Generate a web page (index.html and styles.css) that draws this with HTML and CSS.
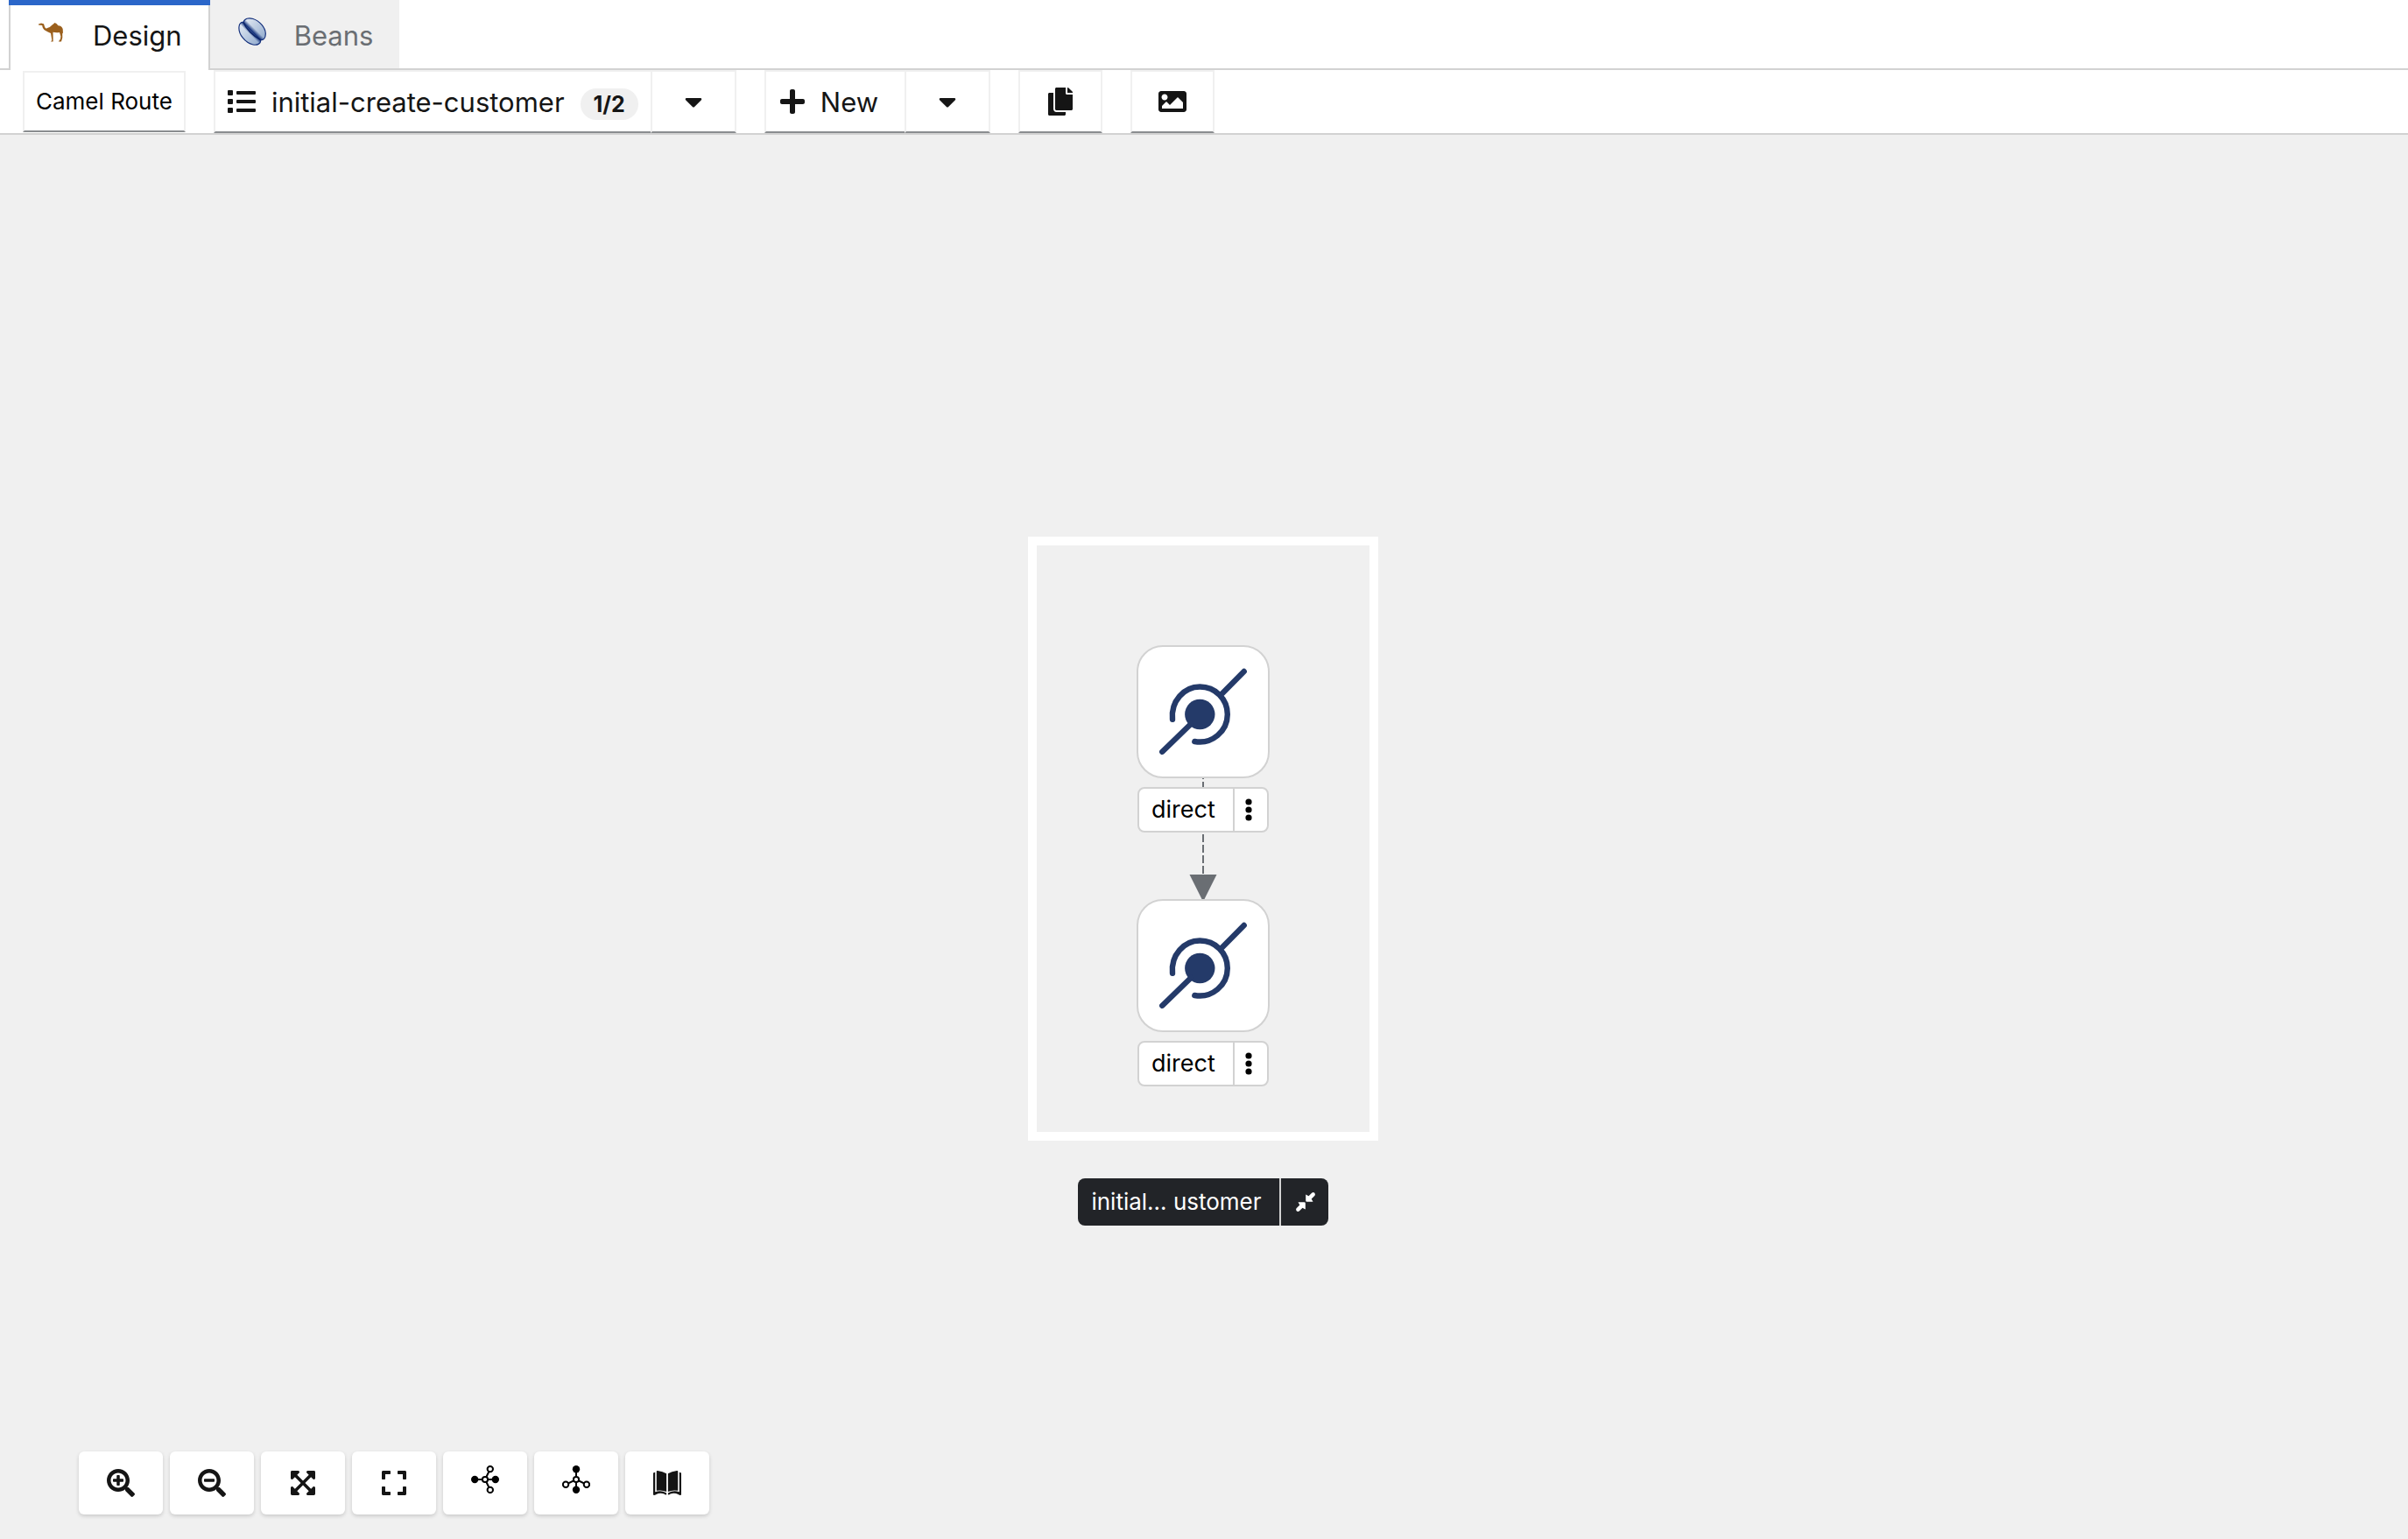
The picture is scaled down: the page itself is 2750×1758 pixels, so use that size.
FILE: index.html
```html
<!DOCTYPE html>
<html lang="en">
<head>
<meta charset="utf-8">
<title>Camel Route designer</title>
<link rel="stylesheet" href="styles.css">
</head>
<body>
<svg class="defs" aria-hidden="true">
  <defs>
    <linearGradient id="bean-light" x1="0" y1="0" x2="1" y2="1">
      <stop offset="0" stop-color="#f0f4f9"/>
      <stop offset="1" stop-color="#86a2c8"/>
    </linearGradient>
    <linearGradient id="bean-groove" x1="1" y1="0" x2="0" y2="1">
      <stop offset="0.400" stop-color="#12307a" stop-opacity="0"/>
      <stop offset="0.500" stop-color="#12307a"/>
      <stop offset="0.600" stop-color="#12307a" stop-opacity="0"/>
    </linearGradient>
    <symbol id="caret" viewBox="0 0 320 512"><path d="M31.3 192h257.3c17.8 0 26.7 21.5 14.1 34.1L174.1 354.7c-7.8 7.8-20.5 7.8-28.3 0L17.2 226.1C4.6 213.5 13.4 192 31.3 192z"/></symbol>
    <symbol id="direct" viewBox="0 0 148 148">
      <circle cx="70.3" cy="77" r="17.2"/>
      <path d="M39 82.7C37 62 52 45.5 70.3 45.5C88 45.5 101.8 59.5 101.8 77C101.8 96.500 84 111.500 64.300 108M27.300 119.700L60 88M95 54L120.700 28" fill="none" stroke="currentColor" stroke-width="6.400" stroke-linecap="round"/>
    </symbol>
    <symbol id="kebab" viewBox="0 0 8 26"><circle cx="4" cy="4" r="3.600"/><circle cx="4" cy="13" r="3.600"/><circle cx="4" cy="22" r="3.600"/></symbol>
  </defs>
</svg>

<div class="tabs" role="tablist">
  <button class="tab tab-active" role="tab" aria-selected="true">
    <svg class="camel" viewBox="0 0 28 22" aria-hidden="true"><path d="M0 1.500L3 .5L6 1.200L7 4.500Q8 7.500 10 6Q13 5.300 15 3Q17 1.500 18.500 0Q20.500 .5 22.500 3.200Q26.500 3.500 27.700 7L28 12.500L27.200 11.500Q28 17 26 21.500L22.800 21.500L25 18.500L25.400 15.500L24 11Q20 11.500 16.500 10.800L16.700 21.500L14 21.500L15.300 20L14 12Q10.500 10.500 8 9Q4.500 7 4.200 3L0 2.500Z"/></svg>
    <span>Design</span>
  </button>
  <button class="tab" role="tab" aria-selected="false">
    <svg class="bean" viewBox="0 0 32 32" aria-hidden="true">
      <path d="M6 5.500C7 1 12 0 17 1.500C25 4 31 12 31.300 18C31.500 23 29 26.500 25.500 25.500C26.500 29.500 22 32 17 31C8 29 0 19 1 10.500C1.300 7.500 3 5 6 5.500Z" fill="url(#bean-light)"/>
      <path d="M6 5.500C7 1 12 0 17 1.500C25 4 31 12 31.300 18C31.500 23 29 26.500 25.500 25.500C26.500 29.500 22 32 17 31C8 29 0 19 1 10.500C1.300 7.500 3 5 6 5.500Z" fill="url(#bean-groove)" stroke="#14307c" stroke-width="1.200"/>
      <path d="M6 5.500C9 13 17 21 25.500 25.500" fill="none" stroke="#0c2468" stroke-width="1.500"/>
    </svg>
    <span>Beans</span>
  </button>
</div>

<div class="toolbar" role="toolbar" aria-label="Route actions">
  <button class="control dsl">Camel Route</button>
  <div class="split">
    <button class="control flow">
      <svg class="icon" viewBox="0 0 512 512" aria-hidden="true"><path d="M80 368H16a16 16 0 0 0-16 16v64a16 16 0 0 0 16 16h64a16 16 0 0 0 16-16v-64a16 16 0 0 0-16-16zm0-320H16A16 16 0 0 0 0 64v64a16 16 0 0 0 16 16h64a16 16 0 0 0 16-16V64a16 16 0 0 0-16-16zm0 160H16a16 16 0 0 0-16 16v64a16 16 0 0 0 16 16h64a16 16 0 0 0 16-16v-64a16 16 0 0 0-16-16zm416 176H176a16 16 0 0 0-16 16v32a16 16 0 0 0 16 16h320a16 16 0 0 0 16-16v-32a16 16 0 0 0-16-16zm0-320H176a16 16 0 0 0-16 16v32a16 16 0 0 0 16 16h320a16 16 0 0 0 16-16V80a16 16 0 0 0-16-16zm0 160H176a16 16 0 0 0-16 16v32a16 16 0 0 0 16 16h320a16 16 0 0 0 16-16v-32a16 16 0 0 0-16-16z"/></svg>
      <span class="control-text">initial-create-customer</span>
      <span class="badge">1/2</span>
    </button>
    <button class="control toggle" aria-label="Choose route"><svg class="icon-caret" aria-hidden="true"><use href="#caret"/></svg></button>
  </div>
  <div class="split">
    <button class="control new">
      <svg class="icon-narrow" viewBox="0 0 448 512" aria-hidden="true"><path d="M416 208H272V64c0-17.670-14.330-32-32-32h-32c-17.670 0-32 14.330-32 32v144H32c-17.670 0-32 14.330-32 32v32c0 17.670 14.330 32 32 32h144v144c0 17.670 14.330 32 32 32h32c17.670 0 32-14.330 32-32V304h144c17.670 0 32-14.330 32-32v-32c0-17.670-14.330-32-32-32z"/></svg>
      <span class="control-text">New</span>
    </button>
    <button class="control toggle" aria-label="Choose type"><svg class="icon-caret" aria-hidden="true"><use href="#caret"/></svg></button>
  </div>
  <button class="control square" aria-label="Copy"><svg class="icon-narrow" viewBox="0 0 448 512" aria-hidden="true"><path d="M320 448v40c0 13.255-10.745 24-24 24H24c-13.255 0-24-10.745-24-24V120c0-13.255 10.745-24 24-24h72v296c0 30.879 25.121 56 56 56h168zm0-344V0H152c-13.255 0-24 10.745-24 24v368c0 13.255 10.745 24 24 24h272c13.255 0 24-10.745 24-24V128H344c-13.200 0-24-10.800-24-24zm120.971-31.029L375.029 7.029A24 24 0 0 0 358.059 0H352v96h96v-6.059a24 24 0 0 0-7.029-16.970z"/></svg></button>
  <button class="control square" aria-label="Export as image"><svg class="icon" viewBox="0 0 512 512" aria-hidden="true"><path d="M464 448H48c-26.510 0-48-21.490-48-48V112c0-26.510 21.490-48 48-48h416c26.510 0 48 21.490 48 48v288c0 26.510-21.490 48-48 48zM112 120c-30.928 0-56 25.072-56 56s25.072 56 56 56 56-25.072 56-56-25.072-56-56-56zM64 384h384V272l-87.515-87.515c-4.686-4.686-12.284-4.686-16.971 0L208 320l-55.515-55.515c-4.686-4.686-12.284-4.686-16.971 0L64 336v48z"/></svg></button>
</div>

<main class="canvas">
  <section class="group">
    <div class="step">
      <div class="node"><svg class="node-icon" aria-hidden="true"><use href="#direct"/></svg></div>
      <svg class="edge" viewBox="0 0 32 140" aria-hidden="true"><path d="M16 0V112" fill="none" stroke="#6a6e73" stroke-width="2" stroke-dasharray="9 3" stroke-dashoffset="8"/><path d="M.5 110H31.500L17.500 138H14.500Z" fill="#6a6e73"/></svg>
      <div class="label"><span class="label-text">direct</span><button class="label-menu" aria-label="Step menu"><svg class="kebab" aria-hidden="true"><use href="#kebab"/></svg></button></div>
    </div>
    <div class="step">
      <div class="node"><svg class="node-icon" aria-hidden="true"><use href="#direct"/></svg></div>
      <div class="label"><span class="label-text">direct</span><button class="label-menu" aria-label="Step menu"><svg class="kebab" aria-hidden="true"><use href="#kebab"/></svg></button></div>
    </div>
  </section>
  <div class="below">
    <div class="group-label"><span class="group-name">initial… ustomer</span><button class="collapse" aria-label="Collapse group"><svg class="collapse-icon" viewBox="0 0 24 24" aria-hidden="true"><path d="M12.200 3.500V10.500Q12.200 11.800 13.500 11.800H20.500L18.700 8.500L22.500 4.700Q23.500 3 22.300 1.700Q21 .5 19.300 1.500L15.500 5.300ZM11.800 20.500V13.500Q11.800 12.200 10.500 12.200H3.500L5.300 15.500L1.500 19.300Q.5 21 1.700 22.300Q3 23.500 4.700 22.500L8.500 18.700Z"/></svg></button></div>
    <div class="controls" role="toolbar" aria-label="Canvas controls">
      <button class="canvas-button" aria-label="Zoom in"><svg class="icon" viewBox="0 0 512 512" aria-hidden="true"><path d="M304 192v32c0 6.600-5.400 12-12 12h-56v56c0 6.600-5.400 12-12 12h-32c-6.600 0-12-5.400-12-12v-56h-56c-6.600 0-12-5.400-12-12v-32c0-6.600 5.400-12 12-12h56v-56c0-6.600 5.400-12 12-12h32c6.600 0 12 5.400 12 12v56h56c6.600 0 12 5.400 12 12zm201 284.700L476.700 505c-9.400 9.400-24.600 9.400-33.900 0L343 405.300c-4.500-4.500-7-10.600-7-17V372c-35.300 27.600-79.700 44-128 44C93.100 416 0 322.900 0 208S93.100 0 208 0s208 93.100 208 208c0 48.300-16.400 92.700-44 128h16.300c6.400 0 12.500 2.500 17 7l99.700 99.700c9.300 9.400 9.300 24.600 0 34zM344 208c0-75.200-60.800-136-136-136S72 132.800 72 208s60.800 136 136 136 136-60.800 136-136z"/></svg></button>
      <button class="canvas-button" aria-label="Zoom out"><svg class="icon" viewBox="0 0 512 512" aria-hidden="true"><path d="M304 192v32c0 6.600-5.400 12-12 12H124c-6.600 0-12-5.400-12-12v-32c0-6.600 5.400-12 12-12h168c6.600 0 12 5.400 12 12zm201 284.700L476.700 505c-9.400 9.400-24.600 9.400-33.900 0L343 405.300c-4.500-4.500-7-10.600-7-17V372c-35.300 27.600-79.700 44-128 44C93.100 416 0 322.900 0 208S93.100 0 208 0s208 93.100 208 208c0 48.300-16.400 92.700-44 128h16.300c6.400 0 12.500 2.500 17 7l99.700 99.700c9.300 9.400 9.300 24.600 0 34zM344 208c0-75.200-60.800-136-136-136S72 132.800 72 208s60.800 136 136 136 136-60.800 136-136z"/></svg></button>
      <button class="canvas-button" aria-label="Fit to screen"><svg class="icon-narrow" viewBox="0 0 448 512" aria-hidden="true"><path d="M448 344v112a23.940 23.940 0 0 1-24 24H312c-21.390 0-32.090-25.900-17-41l36.200-36.200L224 295.600 116.770 402.900 153 439c15.090 15.100 4.390 41-17 41H24a23.940 23.940 0 0 1-24-24V344c0-21.400 25.890-32.100 41-17l36.190 36.200L184.460 256 77.180 148.700 41 185c-15.100 15.100-41 4.400-41-17V56a23.940 23.940 0 0 1 24-24h112c21.390 0 32.090 25.900 17 41l-36.200 36.200L224 216.400l107.230-107.300L295 73c-15.090-15.100-4.390-41 17-41h112a23.940 23.940 0 0 1 24 24v112c0 21.400-25.890 32.100-41 17l-36.190-36.200L263.540 256l107.280 107.300L407 327.100c15.100-15.200 41-4.500 41 16.900z"/></svg></button>
      <button class="canvas-button" aria-label="Reset view"><svg class="icon-narrow" viewBox="0 0 448 512" aria-hidden="true"><path d="M0 180V56c0-13.300 10.700-24 24-24h124c6.600 0 12 5.400 12 12v40c0 6.600-5.400 12-12 12H64v84c0 6.600-5.400 12-12 12H12c-6.600 0-12-5.400-12-12zM288 44v40c0 6.600 5.400 12 12 12h84v84c0 6.600 5.400 12 12 12h40c6.600 0 12-5.400 12-12V56c0-13.300-10.700-24-24-24H300c-6.600 0-12 5.400-12 12zm148 276h-40c-6.600 0-12 5.400-12 12v84h-84c-6.600 0-12 5.400-12 12v40c0 6.600 5.400 12 12 12h124c13.300 0 24-10.700 24-24V332c0-6.600-5.400-12-12-12zM160 468v-40c0-6.600-5.400-12-12-12H64v-84c0-6.600-5.400-12-12-12H12c-6.600 0-12 5.400-12 12v124c0 13.300 10.700 24 24 24h124c6.600 0 12-5.400 12-12z"/></svg></button>
      <button class="canvas-button layout" aria-label="Horizontal layout"><svg class="icon" viewBox="0 0 32 32" aria-hidden="true"><path d="M4 16H28M16 16L21.800 4M16 16L21.800 28" stroke="#000" stroke-width="2"/><g fill="#fff" stroke="#000" stroke-width="2"><circle cx="16" cy="16" r="3.100"/><circle cx="21.800" cy="4.100" r="3.200"/><circle cx="21.800" cy="27.900" r="3.200"/></g><circle cx="4.200" cy="16" r="4.200"/><circle cx="27.800" cy="16" r="4.200"/></svg></button>
      <button class="canvas-button layout" aria-label="Vertical layout"><svg class="icon" viewBox="0 0 32 32" aria-hidden="true"><path d="M16 4V28M16 16L4 21.800M16 16L28 21.800" stroke="#000" stroke-width="2"/><g fill="#fff" stroke="#000" stroke-width="2"><circle cx="16" cy="16" r="3.100"/><circle cx="4.100" cy="21.800" r="3.200"/><circle cx="27.900" cy="21.800" r="3.200"/></g><circle cx="16" cy="4.200" r="4.200"/><circle cx="16" cy="27.800" r="4.200"/></svg></button>
      <button class="canvas-button" aria-label="Open catalog"><svg class="icon" viewBox="0 0 32 32" aria-hidden="true"><path d="M3.800 2.600Q4 1.800 5 2.100Q11 3 15.100 5.200V26Q10 23.600 3.800 24.800ZM28.200 2.600Q28 1.800 27 2.100Q21 3 16.900 5.200V26Q22 23.600 28.200 24.800Z"/><path d="M0 4.500L2.200 3.700V26.300Q9 23.800 15.100 27.500V29.500Q13 29.500 12.500 28.600Q8 26.800 3.500 29Q1 30.500 0 29.500ZM32 4.500L29.800 3.700V26.300Q23 23.800 16.900 27.500V29.500Q19 29.500 19.500 28.600Q24 26.800 28.500 29Q31 30.500 32 29.500Z"/></svg></button>
    </div>
  </div>
</main>
</body>
</html>
```
FILE: styles.css
```css
* {
  box-sizing: border-box;
}

body {
  margin: 0;
  min-height: 100vh;
  display: flex;
  flex-direction: column;
  background: #fff;
  color: #151515;
  font-family: Inter, "Liberation Sans", sans-serif;
  font-size: 31px;
  line-height: 48px;
}

button {
  margin: 0;
  padding: 0;
  border: 0;
  background: none;
  color: inherit;
  font: inherit;
  cursor: pointer;
}

svg {
  display: block;
  flex: none;
  fill: currentColor;
}

.defs {
  position: absolute;
  width: 0;
  height: 0;
}

.icon {
  width: 32px;
  height: 32px;
}

.icon-narrow {
  width: 28px;
  height: 32px;
}

.icon-caret {
  width: 20px;
  height: 32px;
}

/* Tabs */
.tabs {
  display: flex;
  padding-left: 10px;
  height: 80px;
  border-bottom: 2px solid #d2d2d2;
}

.tab {
  display: flex;
  align-items: center;
  gap: 32px;
  padding: 4px 30px 0 32px;
  background: #f0f0f0;
  color: #6a6e73;
}

.tab-active {
  position: relative;
  gap: 34px;
  margin-bottom: -2px;
  padding-bottom: 2px;
  border: solid #d2d2d2;
  border-width: 0 2px;
  background: #fff;
  color: #151515;
}

.tab-active::before {
  content: "";
  position: absolute;
  top: 0;
  left: -2px;
  right: -2px;
  height: 6px;
  background: #2b66c9;
}

.camel {
  width: 28px;
  height: 22px;
  margin-bottom: 8px;
  fill: #9b601d;
}

.bean {
  width: 32px;
  height: 32px;
  margin-bottom: 10px;
}

/* Toolbar */
.toolbar {
  display: flex;
  align-items: center;
  gap: 32px;
  padding-left: 26px;
  height: 74px;
  border-bottom: 2px solid #d2d2d2;
}

.split {
  display: flex;
}

.control {
  display: flex;
  align-items: center;
  height: 72px;
  border: 2px solid #f0f0f0;
  border-bottom-color: #8a8d90;
}

.control-text {
  padding-top: 2px;
}

.dsl {
  height: 70px;
  padding: 0 13px;
  color: #000;
  font-size: 26px;
}

.flow {
  gap: 18px;
  padding: 0 14px;
}

.badge {
  margin-top: 6px;
  padding: 0 15px;
  border-radius: 18px;
  background: #f0f0f0;
  font-size: 25px;
  font-weight: 700;
  line-height: 36px;
}

.new {
  gap: 18px;
  padding: 0 30px 0 16px;
}

.toggle {
  justify-content: center;
  width: 98px;
  margin-left: -2px;
}

.square {
  justify-content: center;
  width: 96px;
}

/* Canvas */
.canvas {
  flex: 1;
  display: grid;
  grid-template-rows: 1fr auto 1fr;
  justify-items: center;
  padding: 4px 2px 0 0;
  background: #f0f0f0;
}

.group {
  grid-row: 2;
  display: flex;
  flex-direction: column;
  gap: 76px;
  padding: 114px 114px 52px;
  border: 10px solid #fff;
}

.step {
  position: relative;
  display: flex;
  flex-direction: column;
  align-items: center;
  gap: 10px;
}

.node {
  width: 152px;
  height: 152px;
  border: 2px solid #d2d2d2;
  border-radius: 30px;
  background: #fff;
  color: #243a69;
}

.node-icon {
  width: 148px;
  height: 148px;
}

.edge {
  position: absolute;
  top: 152px;
  left: 60px;
  width: 32px;
  height: 140px;
}

.label {
  position: relative;
  display: flex;
  width: 150px;
  height: 52px;
  border: 2px solid #d2d2d2;
  border-radius: 8px;
  background: #fff;
  color: #000;
  font-size: 27px;
}

.label-text {
  flex: 1;
  padding-left: 14px;
}

.label-menu {
  width: 39px;
  padding-left: 12px;
  border-left: 2px solid #d2d2d2;
}

.kebab {
  width: 8px;
  height: 26px;
}

.below {
  grid-row: 3;
  justify-self: stretch;
  display: flex;
  flex-direction: column;
  justify-content: space-between;
  padding: 43px 0 28px;
}

.group-label {
  align-self: center;
  display: flex;
  border-radius: 8px;
  background: #222428;
  color: #fff;
  font-size: 26px;
  line-height: 54px;
}

.group-name {
  padding: 0 20px 0 15px;
}

.collapse {
  display: flex;
  align-items: center;
  width: 56px;
  padding-left: 16px;
  border-left: 2px solid #d2d2d2;
}

.collapse-icon {
  width: 24px;
  height: 24px;
}

.controls {
  display: flex;
  gap: 8px;
  padding-left: 90px;
}

.canvas-button {
  display: flex;
  align-items: center;
  justify-content: center;
  width: 96px;
  height: 72px;
  border-radius: 6px;
  background: #fff;
  box-shadow: 0 2px 4px rgba(3, 3, 3, 0.16);
}

.layout {
  padding-bottom: 8px;
  color: #000;
}
```
